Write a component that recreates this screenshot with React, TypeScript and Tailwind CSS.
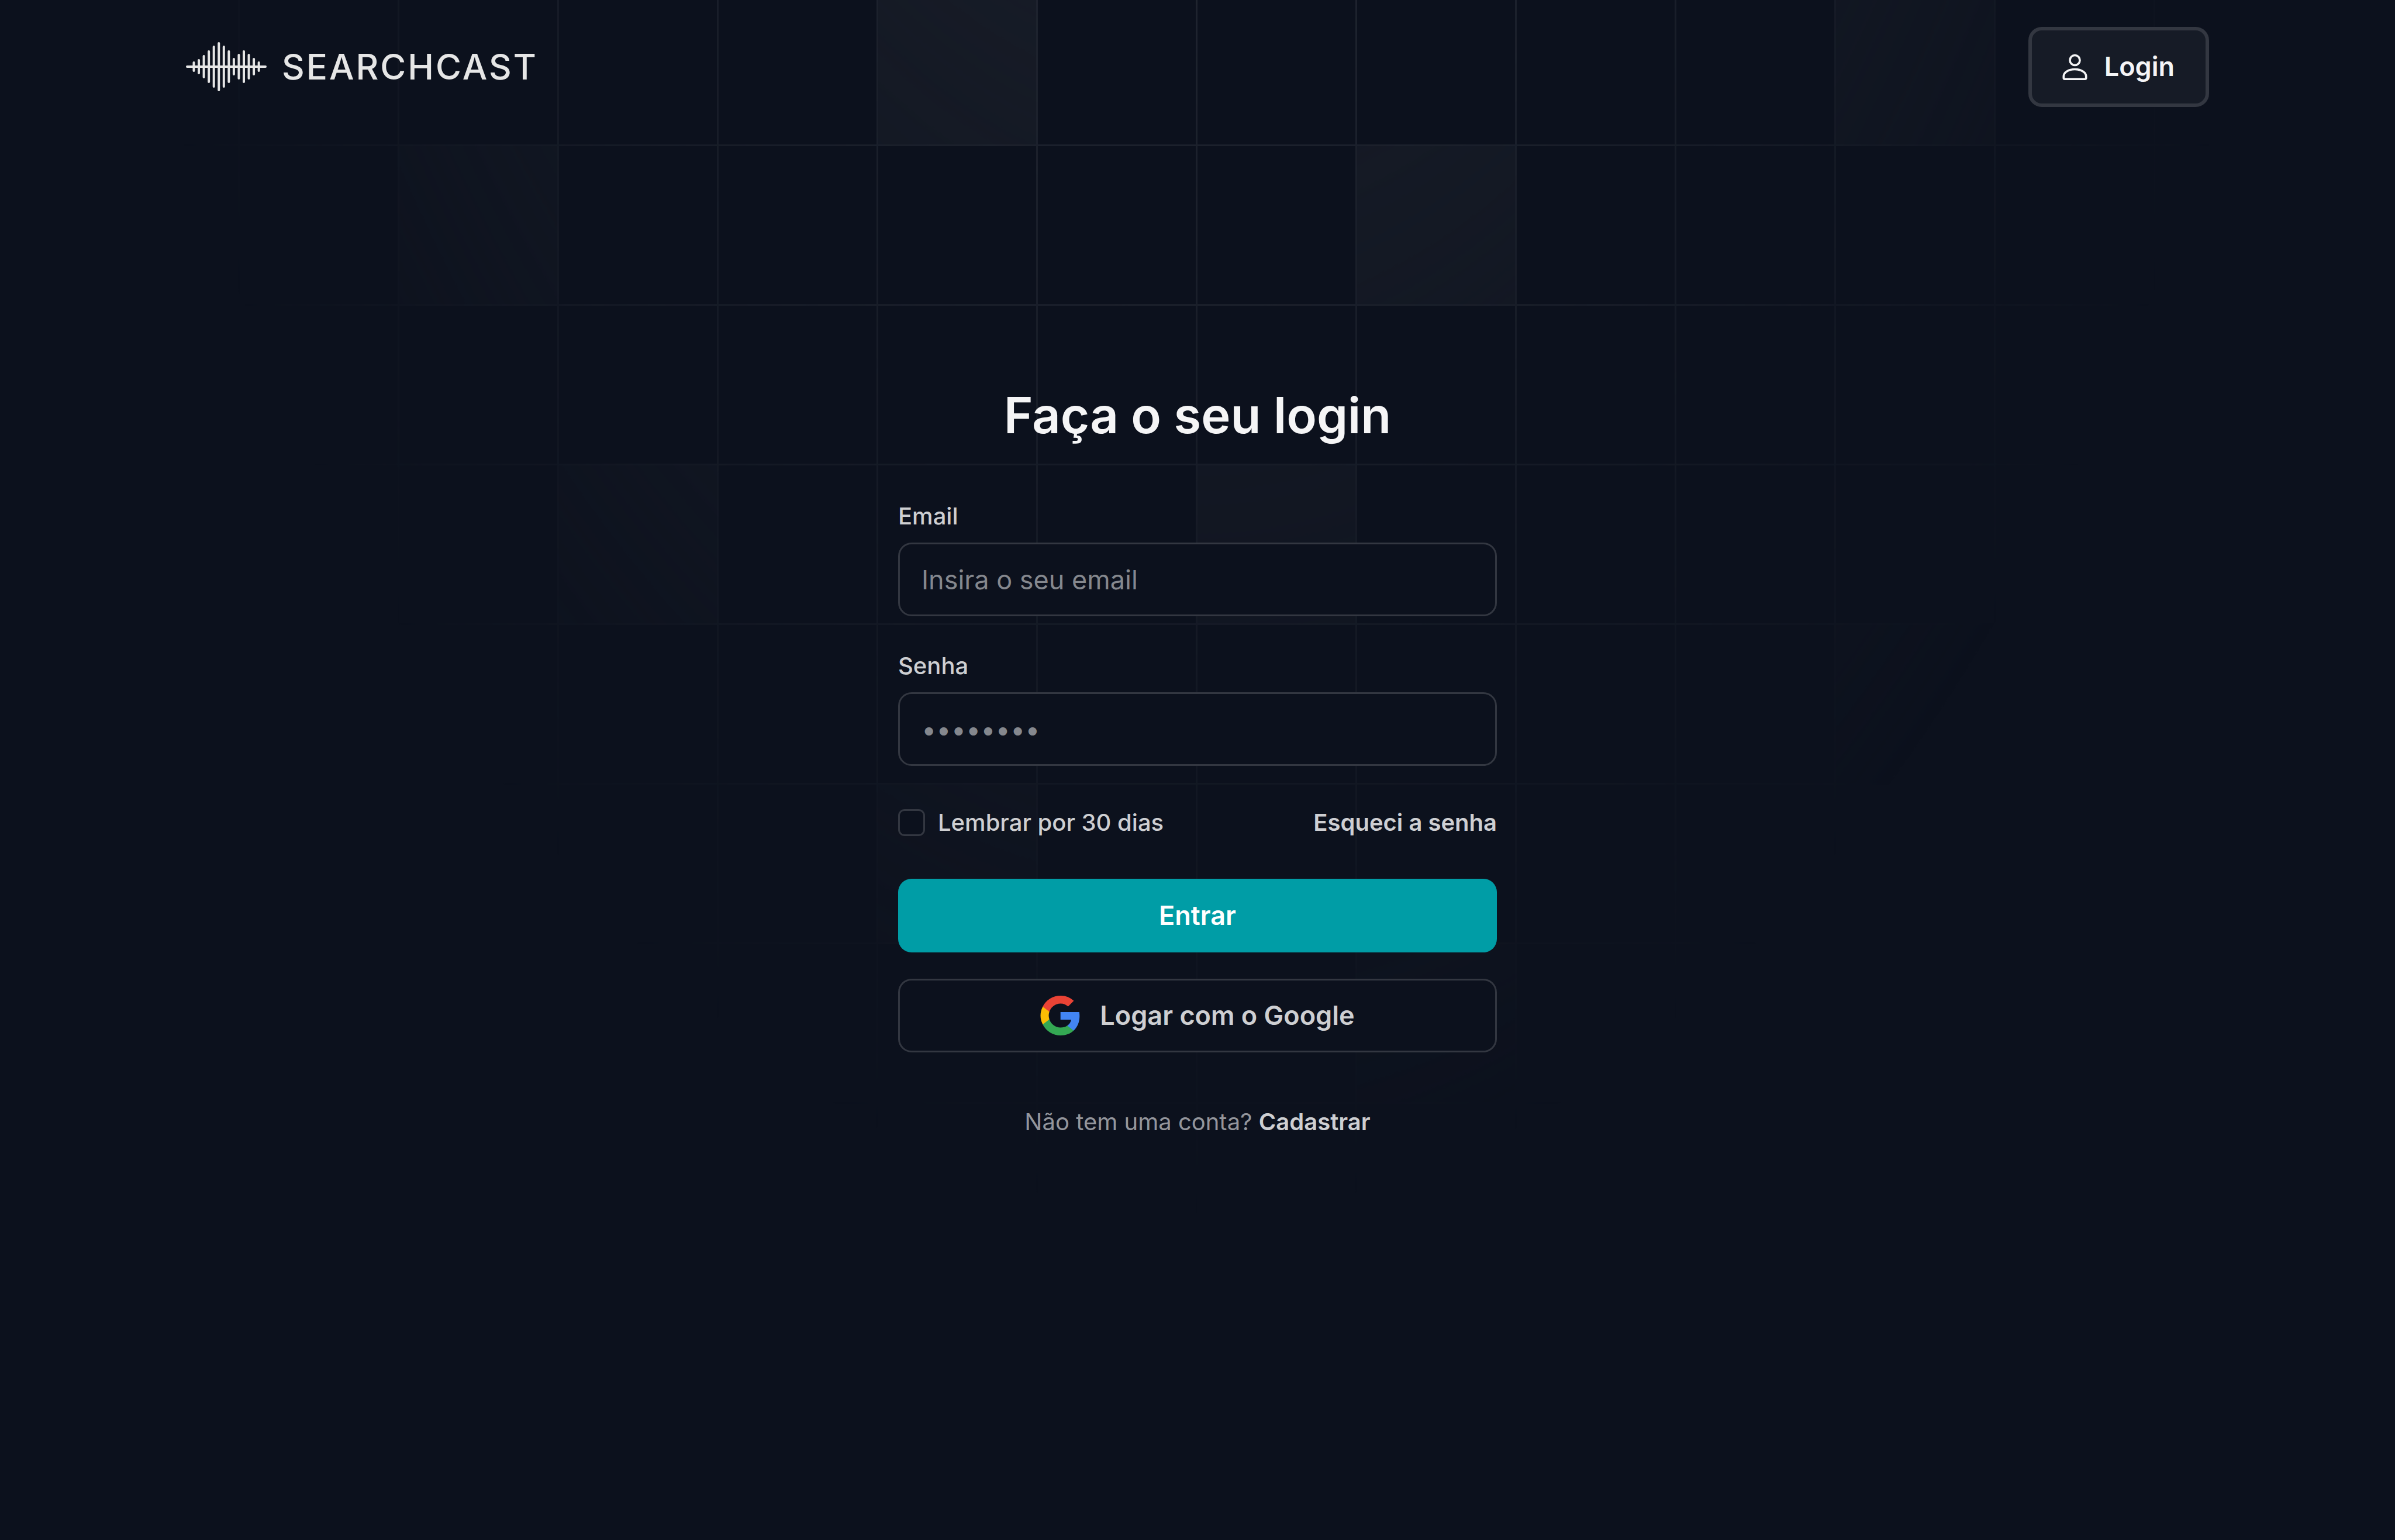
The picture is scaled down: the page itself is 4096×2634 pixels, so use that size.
import { useId } from "react";

const CELL = 273;
const PATTERN_WIDTH = 14 * CELL;
const PATTERN_HEIGHT = 8 * CELL;

// Column and row of every tinted square in the backdrop grid.
const TINTED_CELLS: [number, number][] = [
  [5, 0],
  [11, 0],
  [2, 1],
  [8, 1],
  [3, 3],
  [7, 3],
  [11, 4],
  [5, 5],
  [8, 6],
];

function GridBackdrop() {
  const id = useId();
  return (
    <div aria-hidden="true" className="pointer-events-none absolute inset-x-0 top-0 flex justify-center overflow-hidden">
      <svg
        className="-mt-6 shrink-0"
        width={PATTERN_WIDTH}
        height={PATTERN_HEIGHT}
        viewBox={`1.5 0.5 ${PATTERN_WIDTH} ${PATTERN_HEIGHT}`}
        fill="none"
      >
        <defs>
          <radialGradient
            id={`${id}-fade`}
            gradientUnits="userSpaceOnUse"
            cx="0"
            cy="0"
            r="1"
            gradientTransform={`translate(${PATTERN_WIDTH / 2} -2096) scale(2100 4200)`}
          >
            <stop offset="0.5" stopColor="#fff" />
            <stop offset="1" stopColor="#fff" stopOpacity="0" />
          </radialGradient>
          <mask id={`${id}-mask`} maskUnits="userSpaceOnUse" x="-2" y="-2" width={PATTERN_WIDTH + 4} height={PATTERN_HEIGHT + 4}>
            <rect x="-2" y="-2" width={PATTERN_WIDTH + 4} height={PATTERN_HEIGHT + 4} fill={`url(#${id}-fade)`} />
          </mask>
        </defs>
        <g mask={`url(#${id}-mask)`}>
          {TINTED_CELLS.map(([col, row]) => (
            <rect key={`${col}-${row}`} x={col * CELL} y={row * CELL} width={CELL} height={CELL} fill="#171c27" />
          ))}
          {Array.from({ length: 14 }, (_, i) => (
            <path key={`v${i}`} d={`M${i * CELL} 0V${PATTERN_HEIGHT}`} stroke="#1f242f" strokeWidth="3" />
          ))}
          {Array.from({ length: 8 }, (_, i) => (
            <path key={`h${i}`} d={`M0 ${i * CELL}H${PATTERN_WIDTH}`} stroke="#1f242f" strokeWidth="3" />
          ))}
        </g>
      </svg>
    </div>
  );
}

const WAVE = [9, 13, 20, 28, 36, 42, 36, 28, 15, 22, 28, 22, 15, 9];

function Logo() {
  return (
    <a href="#" aria-label="Searchcast" className="flex items-center gap-[26px] text-[#e6e6e6]">
      <svg width="138" height="86" viewBox="0 0 138 86" fill="none" stroke="currentColor" strokeWidth="4" strokeLinecap="round">
        <path d="M2 43H136" />
        {WAVE.map((half, i) => (
          <path key={i} d={`M${13.5 + i * 8.55} ${45 - half}V${41 + half}`} />
        ))}
      </svg>
      <span className="text-[60px] leading-[72px] font-medium tracking-wider">SEARCHCAST</span>
    </a>
  );
}

function UserIcon() {
  return (
    <svg width="57" height="57" viewBox="0 0 57 57" fill="none" stroke="currentColor" strokeWidth="3.6" strokeLinejoin="round" aria-hidden="true">
      <circle cx="28.5" cy="17" r="8.5" />
      <path d="M9.3 44.6C9.3 37.6 17.8 32.5 28.5 32.5S47.7 37.6 47.7 44.6V47.2A2 2 0 0 1 45.7 49.2H11.3A2 2 0 0 1 9.3 47.2Z" />
    </svg>
  );
}

function GoogleIcon() {
  return (
    <svg width="68" height="68" viewBox="0 0 24 24" aria-hidden="true">
      <path fill="#4285F4" d="M23.77 12.28c0-.82-.07-1.64-.21-2.44H12.24v4.62h6.48a5.55 5.55 0 0 1-2.4 3.65v3h3.87c2.26-2.09 3.58-5.17 3.58-8.83Z" />
      <path fill="#34A853" d="M12.24 24c3.24 0 5.97-1.07 7.96-2.9l-3.87-3c-1.07.73-2.45 1.15-4.09 1.15a7.17 7.17 0 0 1-6.72-4.96H1.53v3.1A12 12 0 0 0 12.24 24Z" />
      <path fill="#FBBC04" d="M5.52 14.29a7.2 7.2 0 0 1 0-4.59V6.61H1.53a12.02 12.02 0 0 0 0 10.78l3.99-3.1Z" />
      <path fill="#EA4335" d="M12.24 4.75c1.71-.03 3.37.62 4.61 1.8l3.43-3.42A11.53 11.53 0 0 0 12.24 0 12 12 0 0 0 1.53 6.61L5.52 9.7a7.17 7.17 0 0 1 6.72-4.95Z" />
    </svg>
  );
}

type FieldProps = { id: string; label: string; type: string; placeholder: string };

function Field({ id, label, type, placeholder }: FieldProps) {
  return (
    <div className="flex flex-col gap-[17px]">
      <label htmlFor={id} className="text-[40px] leading-[57px] font-medium text-[#cecfd2]">
        {label}
      </label>
      <input
        id={id}
        type={type}
        placeholder={placeholder}
        className="h-[126px] w-full rounded-[23px] border-[3px] border-[#333741] bg-[#0c111d] px-[37px] text-[45px] leading-[68px] text-[#f5f5f6] outline-none placeholder:text-[#85888e]"
      />
    </div>
  );
}

export default function App() {
  return (
    <div className="relative min-h-screen bg-[#0c111d] font-['Inter',sans-serif] antialiased">
      <GridBackdrop />
      <header className="relative mx-auto flex h-[228px] max-w-[3642px] items-center justify-between px-[91px]">
        <Logo />
        <button
          type="button"
          className="flex h-[137px] items-center gap-[22px] rounded-[23px] border-[6px] border-[#333741] bg-[#161b26] pr-[53px] pl-[45px] text-[45px] leading-[68px] font-semibold text-[#f5f5f6]"
        >
          <UserIcon />
          Login
        </button>
      </header>

      <main className="relative mx-auto w-full max-w-[1024px] pt-[429px]">
        <h1 className="text-center text-[85px] leading-[108px] font-semibold text-[#f5f5f6]">Faça o seu login</h1>

        <form className="mt-[89px] flex flex-col gap-[68px]" onSubmit={(event) => event.preventDefault()}>
          <div className="flex flex-col gap-14">
            <Field id="email" label="Email" type="email" placeholder="Insira o seu email" />
            <Field id="password" label="Senha" type="password" placeholder="••••••••" />
          </div>

          <div className="flex items-center justify-between text-[40px] leading-[57px] text-[#cecfd2]">
            <label className="flex items-center gap-[22px] font-medium">
              <input type="checkbox" className="size-[46px] appearance-none rounded-[11px] border-[3px] border-[#333741] bg-[#0c111d] checked:bg-[#009da6]" />
              Lembrar por 30 dias
            </label>
            <a href="#" className="font-semibold">
              Esqueci a senha
            </a>
          </div>

          <div className="flex flex-col gap-[45px]">
            <button type="submit" className="h-[126px] rounded-[23px] bg-[#009da6] text-[45px] leading-[68px] font-semibold text-white">
              Entrar
            </button>
            <button
              type="button"
              className="flex h-[126px] items-center justify-center gap-[34px] rounded-[23px] border-[3px] border-[#333741] bg-[#0c111d] text-[45px] leading-[68px] font-semibold text-[#cecfd2]"
            >
              <GoogleIcon />
              Logar com o Google
            </button>
          </div>
        </form>

        <p className="mt-[90px] text-center text-[40px] leading-[57px] text-[#94969c]">
          Não tem uma conta?{" "}
          <a href="#" className="font-semibold text-[#cecfd2]">
            Cadastrar
          </a>
        </p>
      </main>
    </div>
  );
}
